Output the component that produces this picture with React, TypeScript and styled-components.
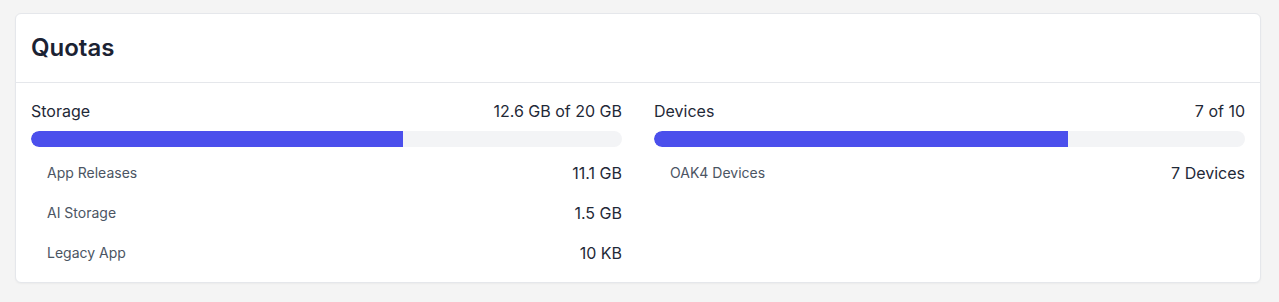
import React from "react";
import styled, { createGlobalStyle } from "styled-components";

const Global = createGlobalStyle`
  html, body { margin: 0; padding: 0; background: #f4f4f4; }
  body { font-family: Inter, "Noto Sans", sans-serif; }
`;

const Page = styled.div`
  padding: 13px 18px 20px 15px;
`;

const Card = styled.section`
  background: #ffffff;
  border: 1px solid #e5e7eb;
  border-radius: 6px;
  box-shadow: 0 1px 2px rgba(0, 0, 0, 0.04);
`;

const Header = styled.header`
  padding: 16px 15px;
  border-bottom: 1px solid #e5e7eb;
`;

const Title = styled.h2`
  margin: 0;
  font-size: 24px;
  line-height: 36px;
  font-weight: 600;
  color: #1b2233;
`;

const Body = styled.div`
  display: grid;
  grid-template-columns: 1fr 1fr;
  column-gap: 32px;
  padding: 16px 15px 9px;
`;

const Column = styled.div`
  display: flex;
  flex-direction: column;
`;

const HeadRow = styled.div`
  display: flex;
  justify-content: space-between;
  align-items: center;
  font-size: 16px;
  line-height: 24px;
  color: #1f2937;
`;

const Track = styled.div`
  margin-top: 8px;
  height: 16px;
  border-radius: 8px;
  background: #f3f4f6;
  overflow: hidden;
`;

const Fill = styled.div`
  height: 100%;
  background: #4b4fec;
  border-radius: 8px 0 0 8px;
`;

const List = styled.div`
  margin-top: 6px;
  display: flex;
  flex-direction: column;
`;

const Item = styled.div`
  display: flex;
  justify-content: space-between;
  align-items: center;
  padding: 8px 0 8px 16px;
  line-height: 24px;
`;

const ItemLabel = styled.span`
  font-size: 14px;
  color: #4b5563;
`;

const ItemValue = styled.span`
  font-size: 16px;
  color: #1f2937;
`;

type Quota = {
  name: string;
  summary: string;
  ratio: number;
  items: { label: string; value: string }[];
};

const quotas: Quota[] = [
  {
    name: "Storage",
    summary: "12.6 GB of 20 GB",
    ratio: 0.63,
    items: [
      { label: "App Releases", value: "11.1 GB" },
      { label: "AI Storage", value: "1.5 GB" },
      { label: "Legacy App", value: "10 KB" },
    ],
  },
  {
    name: "Devices",
    summary: "7 of 10",
    ratio: 0.7,
    items: [{ label: "OAK4 Devices", value: "7 Devices" }],
  },
];

export default function App() {
  return (
    <>
      <Global />
      <Page>
        <Card>
          <Header>
            <Title>Quotas</Title>
          </Header>
          <Body>
            {quotas.map((q) => (
              <Column key={q.name}>
                <HeadRow>
                  <span>{q.name}</span>
                  <span>{q.summary}</span>
                </HeadRow>
                <Track>
                  <Fill style={{ width: `${q.ratio * 100}%` }} />
                </Track>
                <List>
                  {q.items.map((it) => (
                    <Item key={it.label}>
                      <ItemLabel>{it.label}</ItemLabel>
                      <ItemValue>{it.value}</ItemValue>
                    </Item>
                  ))}
                </List>
              </Column>
            ))}
          </Body>
        </Card>
      </Page>
    </>
  );
}
